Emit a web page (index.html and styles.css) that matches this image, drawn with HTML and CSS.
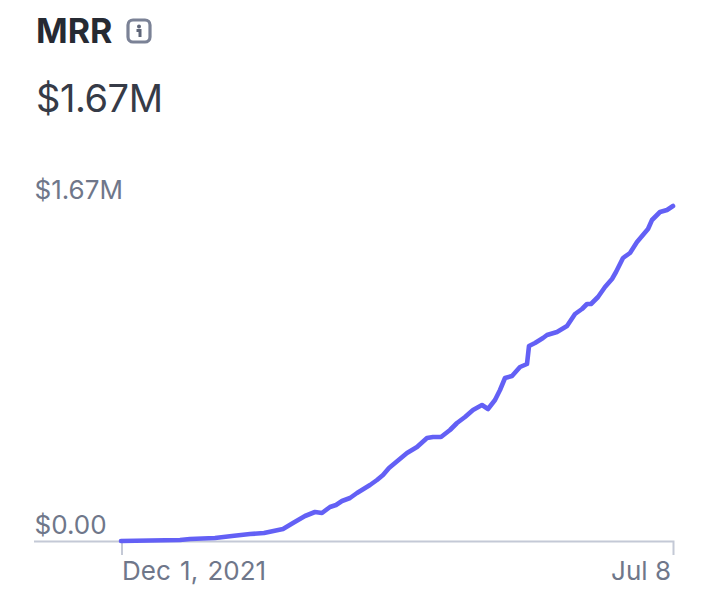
FILE: index.html
```html
<!DOCTYPE html>
<html lang="en">
<head>
<meta charset="utf-8">
<title>MRR</title>
<link rel="stylesheet" href="styles.css">
</head>
<body>
<main class="card">
  <header class="head">
    <h1 class="title">MRR</h1>
    <svg class="info" width="26" height="26" viewBox="0 0 26 26" aria-hidden="true">
      <rect x="2" y="2" width="22" height="22" rx="5" fill="none" stroke="#7b8296" stroke-width="3.2"/>
      <circle cx="13" cy="8.5" r="2" fill="#5f6679"/>
      <path d="M10.5 12.5H14V19" fill="none" stroke="#5f6679" stroke-width="3"/>
    </svg>
  </header>
  <p class="value">$1.67M</p>
  <svg class="chart" width="716" height="440" viewBox="0 170 716 440">
    <text class="label" x="34.5" y="199">$1.67M</text>
    <text class="label" x="34.5" y="534">$0.00</text>
    <path class="axis" d="M34 541.5H673.5V555M122 541.5V555"/>
    <path class="line" d="M121 541L180 540L190 539L215 538L232 536L250 534L264 533L283 529L293 523L305 516L315 512L322 513L330 507L336 505L342 501L350 498L357 493L370 485L377 480L383 475L389 468L395 463L407 453L417 447L427 438L433 437L441 437L450 430L457 423L465 417L473 410L482 405L488 409L495 400L500 390L505 378L512 376L520 367L527 364L529 346L535 343L543 338L547 335L557 332L567 326L575 314L582 309L587 304L591 304L598 297L605 287L612 279L616 272L623 258L630 253L637 242L648 229L652 220L660 212L667 210L673 206"/>
    <text class="label date" x="122" y="580">Dec 1, 2021</text>
    <text class="label end" x="671" y="580">Jul 8</text>
  </svg>
</main>
</body>
</html>
```
FILE: styles.css
```css
html, body {
  margin: 0;
  background: #fff;
}
body {
  font-family: Inter, "Liberation Sans", sans-serif;
  overflow: hidden;
}
.card {
  display: flex;
  flex-direction: column;
  width: 716px;
  height: 610px;
}
.head {
  display: flex;
  align-items: center;
  gap: 14px;
  padding: 12px 0 0 36px;
  height: 38px;
}
.title {
  margin: 0;
  font-size: 34px;
  line-height: 38px;
  font-weight: 700;
  color: #262a33;
}
.info {
  display: block;
}
.value {
  margin: 24px 0 0 36px;
  font-size: 38px;
  line-height: 48px;
  letter-spacing: -0.45px;
  color: #363b47;
}
.chart {
  display: block;
  margin-top: 48px;
  flex: none;
}
.label {
  font-size: 26px;
  fill: #6f778a;
}
.date {
  word-spacing: 2px;
}
.end {
  text-anchor: end;
}
.axis {
  fill: none;
  stroke: #c4c9d6;
  stroke-width: 2;
}
.line {
  fill: none;
  stroke: #6360f5;
  stroke-width: 4.6;
  stroke-linecap: round;
  stroke-linejoin: round;
}
```
